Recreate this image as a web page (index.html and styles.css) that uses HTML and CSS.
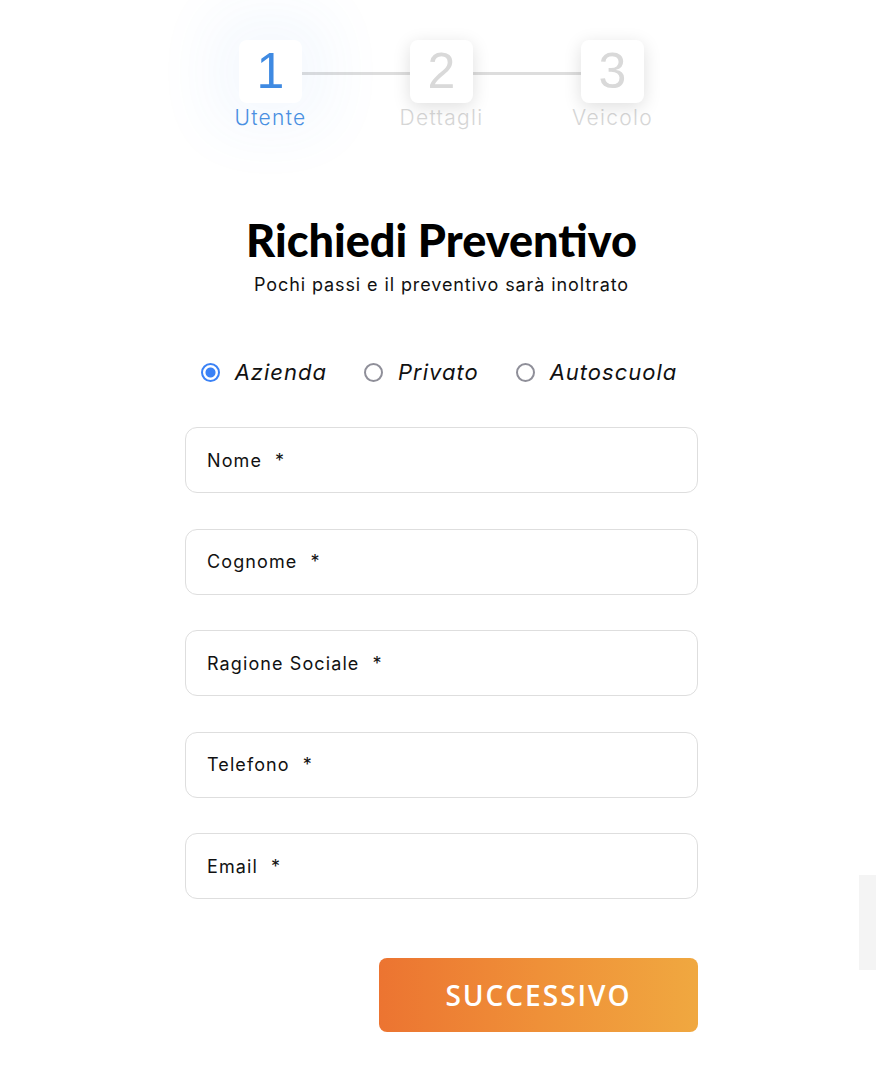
FILE: index.html
```html
<!DOCTYPE html>
<html lang="it">
<head>
<meta charset="utf-8">
<title>Richiedi Preventivo</title>
<link rel="stylesheet" href="styles.css">
</head>
<body>
<div class="page">
  <div class="stepper">
    <div class="step active">
      <div class="step-box">1</div>
      <div class="step-label">Utente</div>
    </div>
    <div class="connector"></div>
    <div class="step">
      <div class="step-box">2</div>
      <div class="step-label">Dettagli</div>
    </div>
    <div class="connector"></div>
    <div class="step">
      <div class="step-box">3</div>
      <div class="step-label">Veicolo</div>
    </div>
  </div>

  <h1 class="title">Richiedi Preventivo</h1>
  <p class="subtitle">Pochi passi e il preventivo sarà inoltrato</p>

  <div class="radios">
    <label class="radio checked"><span class="dot"></span><span class="radio-text">Azienda</span></label>
    <label class="radio"><span class="dot"></span><span class="radio-text">Privato</span></label>
    <label class="radio"><span class="dot"></span><span class="radio-text">Autoscuola</span></label>
  </div>

  <div class="fields">
    <div class="field">Nome <span class="req">*</span></div>
    <div class="field">Cognome <span class="req">*</span></div>
    <div class="field">Ragione Sociale <span class="req">*</span></div>
    <div class="field">Telefono <span class="req">*</span></div>
    <div class="field">Email <span class="req">*</span></div>
  </div>

  <div class="actions">
    <button class="next">SUCCESSIVO</button>
  </div>
</div>
<div class="side-tab"></div>
</body>
</html>
```

FILE: styles.css
```css
html, body {
  margin: 0;
  padding: 0;
  background: #ffffff;
}
body {
  font-family: "Inter", "Noto Sans", sans-serif;
  color: #111;
  position: relative;
  min-height: 1078px;
}
.page {
  width: 513px;
  margin-left: 185px;
  padding-top: 40px;
}
.stepper {
  display: flex;
  justify-content: center;
  align-items: flex-start;
}
.step {
  width: 63px;
  display: flex;
  flex-direction: column;
  align-items: center;
}
.step-box {
  width: 63px;
  height: 63px;
  border-radius: 8px;
  background: #fff;
  box-shadow: 0 4px 18px rgba(0,0,0,0.13);
  font-family: "Liberation Sans", Arial, sans-serif;
  font-size: 50px;
  line-height: 63px;
  text-align: center;
  color: #d9d9d9;
  position: relative;
  z-index: 1;
}
.step.active .step-box {
  color: #3f8ae2;
  box-shadow: 0 0 60px 30px rgba(66,145,240,0.05);
}
.step-label {
  white-space: nowrap;
  font-size: 21px;
  line-height: 28px;
  letter-spacing: 1.3px;
  margin-top: 1px;
  color: #d6d6d6;
  font-weight: 300;
}
.step.active .step-label {
  color: #4a90e2;
}
.connector {
  width: 108px;
  height: 3px;
  background: #dddddd;
  margin-top: 32px;
}
.title {
  margin: 82px 0 0;
  text-align: center;
  font-family: "Lato", sans-serif;
  font-weight: 900;
  font-size: 45px;
  line-height: 52px;
  color: #000;
}
.subtitle {
  margin: 6px 0 0;
  text-align: center;
  font-size: 18px;
  line-height: 26px;
  letter-spacing: 0.9px;
  color: #111;
}
.radios {
  display: flex;
  justify-content: center;
  gap: 37px;
  margin-top: 59px;
  padding-right: 5px;
}
.radio {
  display: flex;
  align-items: center;
  gap: 15px;
  font-style: italic;
  font-size: 22px;
  line-height: 30px;
  letter-spacing: 1px;
  color: #111;
}
.dot {
  width: 15px;
  height: 15px;
  border-radius: 50%;
  border: 2.5px solid #8f8f99;
  box-sizing: content-box;
  flex: none;
}
.radio.checked .dot {
  border-color: #3b82f6;
  background: radial-gradient(circle, #3b82f6 0 4.5px, #fff 5.5px);
}
.fields {
  margin-top: 40px;
  display: flex;
  flex-direction: column;
  gap: 35.5px;
}
.field {
  height: 64px;
  border: 1px solid #dedede;
  border-radius: 12px;
  padding-left: 21px;
  display: flex;
  align-items: center;
  font-size: 18px;
  letter-spacing: 1.1px;
  color: #111;
}
.req {
  margin-left: 13px;
}
.actions {
  display: flex;
  justify-content: flex-end;
  margin-top: 59px;
}
.next {
  width: 319px;
  height: 74px;
  border: none;
  border-radius: 8px;
  background: linear-gradient(90deg, #ec7431 0%, #ef9038 50%, #f0a840 100%);
  color: #fff;
  font-family: "Open Sans", sans-serif;
  font-size: 28px;
  letter-spacing: 2px;
  font-weight: 600;
  padding: 0;
}
.side-tab {
  position: absolute;
  left: 859px;
  top: 875px;
  width: 17px;
  height: 95px;
  background: #f4f4f4;
}
```
